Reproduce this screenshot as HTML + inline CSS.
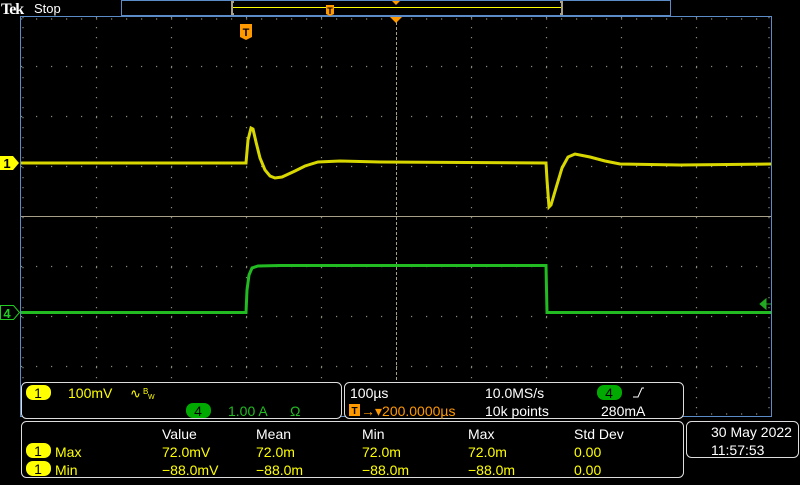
<!DOCTYPE html><html><head><style>
body{margin:0;background:#000;width:800px;height:480px;overflow:hidden;font-family:"Liberation Sans",sans-serif;}
</style></head><body>
<svg width="800" height="480" xmlns="http://www.w3.org/2000/svg" font-family="Liberation Sans, sans-serif">
<rect width="800" height="480" fill="#000"/>
<g stroke="#8a8a7a" stroke-width="1.2" stroke-dasharray="1.2,8.8">
<line x1="96.5" y1="17" x2="96.5" y2="416"/>
<line x1="171.5" y1="17" x2="171.5" y2="416"/>
<line x1="246.5" y1="17" x2="246.5" y2="416"/>
<line x1="321.5" y1="17" x2="321.5" y2="416"/>
<line x1="471.5" y1="17" x2="471.5" y2="416"/>
<line x1="546.5" y1="17" x2="546.5" y2="416"/>
<line x1="621.5" y1="17" x2="621.5" y2="416"/>
<line x1="696.5" y1="17" x2="696.5" y2="416"/>
</g>
<g stroke="#8a8a7a" stroke-width="1.2" stroke-dasharray="1.2,13.8">
<line x1="21" y1="66.5" x2="771" y2="66.5"/>
<line x1="21" y1="116.5" x2="771" y2="116.5"/>
<line x1="21" y1="166.5" x2="771" y2="166.5"/>
<line x1="21" y1="266.5" x2="771" y2="266.5"/>
<line x1="21" y1="316.5" x2="771" y2="316.5"/>
<line x1="21" y1="366.5" x2="771" y2="366.5"/>
<line x1="21" y1="19" x2="771" y2="19"/>
<line x1="21" y1="414" x2="771" y2="414"/>
</g>
<g stroke="#8a8a7a" stroke-width="1.2" stroke-dasharray="1.2,8.8">
<line x1="23" y1="17" x2="23" y2="416"/>
<line x1="769" y1="17" x2="769" y2="416"/>
</g>
<line x1="21" y1="216.5" x2="771" y2="216.5" stroke="#a89f88" stroke-width="1"/>
<line x1="396.5" y1="17" x2="396.5" y2="416" stroke="#a89f88" stroke-width="1" stroke-dasharray="3,2"/>
<rect x="20.5" y="16.5" width="751" height="400" fill="none" stroke="#5b8cc8" stroke-width="1"/>
<rect x="121.5" y="0.5" width="549" height="15" fill="none" stroke="#5b8cc8"/>
<path d="M234 2 H232 V14 H234" stroke="#a89f88" fill="none" stroke-width="2"/>
<path d="M560 2 H562 V14 H560" stroke="#a89f88" fill="none" stroke-width="2"/>
<line x1="233" y1="7.5" x2="561" y2="7.5" stroke="#ffff00" stroke-width="1"/>
<path d="M326 5 h8 v9 l-4 2 l-4 -2z" fill="#ff9900"/><text x="330" y="14" font-size="9" font-weight="bold" text-anchor="middle" fill="#000">T</text>
<path d="M392 1 h8 l-4 4z" fill="#ff9900"/>
<path d="M390 17 h12 l-6 6z" fill="#ff9900"/>
<text x="1" y="14" font-size="16" font-weight="bold" fill="#fff" font-family="Liberation Serif, serif" letter-spacing="-1">Tek</text>
<text x="34" y="13" font-size="13" fill="#fff">Stop</text>
<path d="M240 24 h12 v13 l-6 3 l-6 -3z" fill="#ff9900"/><text x="246" y="36" font-size="11" font-weight="bold" text-anchor="middle" fill="#000">T</text>
<path d="M0 156 h13 l6 7 l-6 7 h-13z" fill="#ffff00"/><text x="7" y="168" font-size="13" font-weight="bold" text-anchor="middle" fill="#000">1</text>
<path d="M0.5 305.5 h13 l6 7 l-6 7 h-13z" fill="#000" stroke="#22cc22"/><text x="7" y="318" font-size="13" font-weight="bold" text-anchor="middle" fill="#22cc22">4</text>
<path d="M760 304 l6 -5 v10z M764 304 h7" fill="#22aa22" stroke="#22aa22"/>
<path d="M21 163 L246 163 L248 140 L251 128 L253 129 L256 142 L260 158 L265 170 L270 176 L275 178 L282 177 L295 171 L305 166 L318 162 L340 161 L380 162 L546 163 L547 180 L549 207 L551 205 L556 188 L562 168 L568 157 L575 154 L590 157 L605 161 L620 164 L680 165 L771 164" stroke="#d8d800" stroke-width="3" fill="none"/>
<path d="M21 312.5 L246 312.5 L247 290 L249 275 L252 268 L258 266 L280 265.5 L546 265.5 L547 312.5 L771 312.5" stroke="#22bb22" stroke-width="3" fill="none"/>
<rect x="21.5" y="382.5" width="320" height="36" rx="5" fill="#000" stroke="#ddd"/>
<rect x="344.5" y="382.5" width="339" height="36" rx="5" fill="#000" stroke="#ddd"/>
<rect x="21.5" y="421.5" width="662" height="56" rx="5" fill="#000" stroke="#ddd"/>
<rect x="686.5" y="421.5" width="112" height="36" rx="5" fill="#000" stroke="#ddd"/>
<g font-size="14">
<rect x="26" y="385" width="25" height="15" rx="7" fill="#ffff00"/><text x="38" y="398" text-anchor="middle" fill="#000">1</text>
<text x="68" y="398" fill="#ffff00">100mV</text>
<text x="130" y="398" font-size="13" fill="#ffff00">∿</text><text x="143" y="394" font-size="8" fill="#ffff00">B</text><text x="148" y="399" font-size="7" fill="#ffff00">W</text>
<rect x="186" y="403" width="25" height="15" rx="7" fill="#00aa00"/><text x="198" y="416" text-anchor="middle" fill="#000">4</text>
<text x="228" y="416" fill="#22bb22">1.00 A</text>
<text x="290" y="416" fill="#22bb22">Ω</text>
<text x="350" y="398" fill="#fff">100µs</text>
<rect x="349" y="404" width="11" height="12" fill="#ff9900"/><text x="354.5" y="414" font-size="10" font-weight="bold" text-anchor="middle" fill="#000">T</text>
<text x="361" y="416" fill="#ff9900">→▾200.0000µs</text>
<text x="485" y="398" fill="#fff">10.0MS/s</text>
<text x="485" y="416" fill="#fff">10k points</text>
<rect x="597" y="385" width="25" height="15" rx="7" fill="#00aa00"/><text x="609" y="398" text-anchor="middle" fill="#000">4</text>
<path d="M633 397 l5 0 l4 -9 l2 0" stroke="#fff" fill="none"/>
<text x="601" y="416" fill="#fff">280mA</text>
<text x="162" y="439" fill="#fff">Value</text><text x="256" y="439" fill="#fff">Mean</text><text x="362" y="439" fill="#fff">Min</text><text x="468" y="439" fill="#fff">Max</text><text x="574" y="439" fill="#fff">Std Dev</text>
<rect x="26" y="443" width="25" height="15" rx="7" fill="#ffff00"/><text x="38" y="456" text-anchor="middle" fill="#000">1</text>
<text x="55" y="457" fill="#ffff00">Max</text><text x="162" y="457" fill="#ffff00">72.0mV</text><text x="256" y="457" fill="#ffff00">72.0m</text><text x="362" y="457" fill="#ffff00">72.0m</text><text x="468" y="457" fill="#ffff00">72.0m</text><text x="574" y="457" fill="#ffff00">0.00</text>
<rect x="26" y="461" width="25" height="15" rx="7" fill="#ffff00"/><text x="38" y="474" text-anchor="middle" fill="#000">1</text>
<text x="55" y="475" fill="#ffff00">Min</text><text x="162" y="475" fill="#ffff00">−88.0mV</text><text x="256" y="475" fill="#ffff00">−88.0m</text><text x="362" y="475" fill="#ffff00">−88.0m</text><text x="468" y="475" fill="#ffff00">−88.0m</text><text x="574" y="475" fill="#ffff00">0.00</text>
<text x="711" y="437" fill="#fff">30 May  2022</text>
<text x="711" y="455" fill="#fff">11:57:53</text>
</g>
</svg>
</body></html>
